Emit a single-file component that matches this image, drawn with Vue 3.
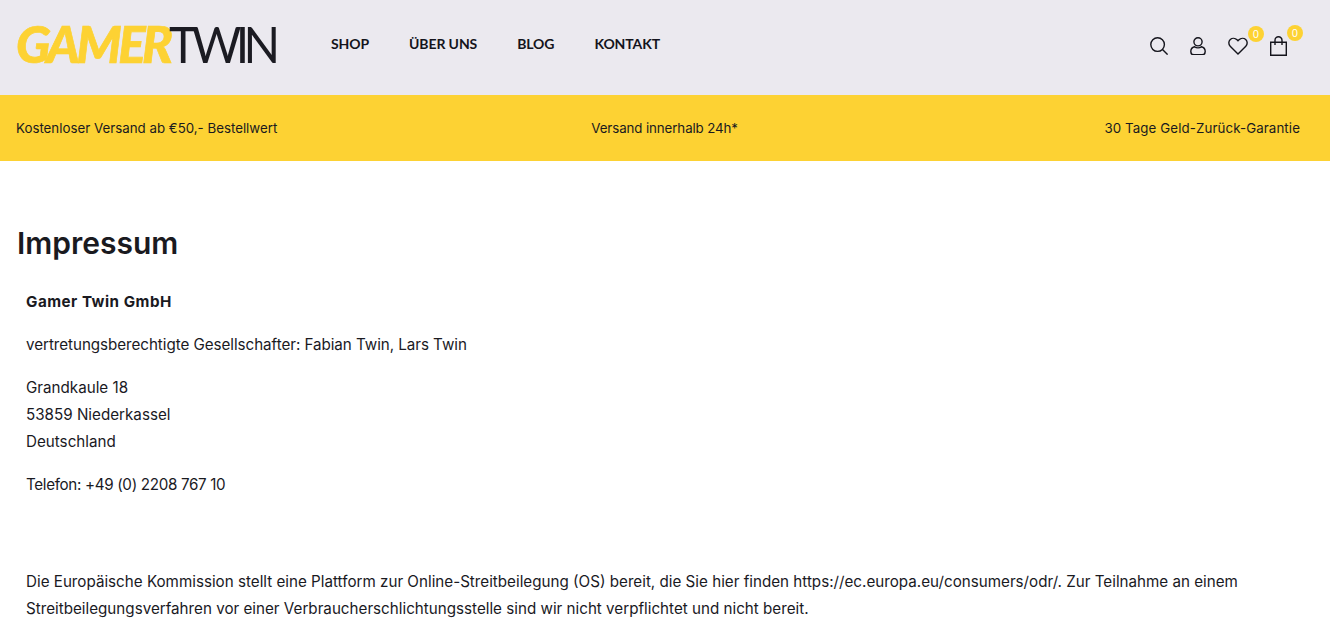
<template>
  <div class="page">
    <header class="top">
      <div class="logo"><span class="gamer">GAMER</span><span class="twin">TWIN</span></div>
      <nav class="nav">
        <a v-for="item in nav" :key="item">{{ item }}</a>
      </nav>
      <div class="icons">
        <svg class="ico search" viewBox="0 0 18 18"><circle cx="7.6" cy="7.600" r="6.800"/><path d="M12.500 12.500 17.600 17.600"/></svg>
        <svg class="ico person" viewBox="0 0 16 18.500"><circle cx="8" cy="4.800" r="4.100"/><path d="M4.600 9.700C2 10.300.8 12 .8 14.500c0 2 1 3.300 3 3.300h8.400c2 0 3-1.300 3-3.300 0-2.500-1.200-4.200-3.800-4.800-.9.800-2.100 1.200-3.400 1.200s-2.500-.4-3.400-1.200Z"/></svg>
        <span class="wrap">
          <svg class="ico heart" viewBox="0 0 20 18"><path d="M10 17 2.200 9.200C.3 7.300.4 4.200 2.300 2.500 4.200.8 7.200 1 9 2.800l1 1 1-1c1.800-1.800 4.800-2 6.700-.3 1.900 1.700 2 4.800.1 6.700L10 17Z"/></svg>
          <span class="badge">0</span>
        </span>
        <span class="wrap">
          <svg class="ico bag" viewBox="0 0 17 20"><path d="M.7 6.200h15.600v13H.7zM5 9V4.200a3.500 3.500 0 0 1 7 0V9"/></svg>
          <span class="badge">0</span>
        </span>
      </div>
    </header>
    <div class="strip">
      <span class="cell">Kostenloser Versand ab €50,- Bestellwert</span>
      <span class="cell mid">Versand innerhalb 24h*</span>
      <span class="cell end">30 Tage Geld-Zurück-Garantie</span>
    </div>
    <main class="main">
      <h1>Impressum</h1>
      <div class="body">
        <p><strong>Gamer Twin GmbH</strong></p>
        <p class="rep">vertretungsberechtigte Gesellschafter: Fabian Twin, Lars Twin</p>
        <p>Grandkaule 18<br>53859 Niederkassel<br>Deutschland</p>
        <p class="tel">Telefon: +49 (0) 2208 767 10</p>
        <p class="gap">Die Europäische Kommission stellt eine Plattform zur Online-Streitbeilegung (OS) bereit, die Sie hier finden https://ec.europa.eu/consumers/odr/. Zur Teilnahme an einem Streitbeilegungsverfahren vor einer Verbraucherschlichtungsstelle sind wir nicht verpflichtet und nicht bereit.</p>
      </div>
    </main>
  </div>
</template>

<script setup>
const nav = ['SHOP', 'ÜBER UNS', 'BLOG', 'KONTAKT']
</script>

<style>
html, body { margin: 0; background: #fff; }
</style>

<style scoped>
.page {
  width: 1330px;
  height: 640px;
  overflow: hidden;
  font-family: "Inter", "Liberation Sans", sans-serif;
  color: #1a1a1f;
}
.top {
  height: 95px;
  background: #ebe9ef;
  display: flex;
  align-items: center;
  padding: 0 43px 7px 16px;
  box-sizing: border-box;
}
.logo {
  width: 315px;
  flex: none;
  font-size: 51px;
  line-height: 1;
  white-space: nowrap;
  font-family: "Lato", sans-serif;
  margin-top: -2px;
}
.gamer {
  color: #fdd233;
  font-weight: 900;
  font-style: italic;
  letter-spacing: -3.500px;
  -webkit-text-stroke: 0.7px #fdd233;
}
.twin {
  display: inline-block;
  color: #1b1b22;
  font-weight: 400;
  letter-spacing: -6px;
  transform: scaleX(0.94);
  transform-origin: left center;
}
.nav { display: flex; gap: 40px; flex: 1; margin-top: -1px; }
.nav a {
  font-family: "Lato", sans-serif;
  font-weight: 700;
  font-size: 14px;
  letter-spacing: -0.1px;
  color: #14141c;
}
.icons { display: flex; align-items: center; gap: 22px; margin-top: 4px; }
.ico {
  fill: none;
  stroke: #14141c;
  stroke-width: 1.4;
  display: block;
}
.search { width: 18px; height: 18px; }
.person { width: 16px; height: 18.5px; }
.heart { width: 20px; height: 18px; }
.bag { width: 17px; height: 20px; }
.wrap { position: relative; display: block; }
.badge {
  position: absolute;
  top: -11px;
  right: -16px;
  width: 16px;
  height: 16px;
  border-radius: 50%;
  background: #fdd233;
  color: #fff;
  font-size: 10px;
  line-height: 16px;
  text-align: center;
}
.strip {
  height: 66px;
  background: #fdd233;
  display: flex;
  align-items: center;
  padding: 0 30px 0 16px;
  font-size: 13.300px;
  color: #1a1a1f;
}
.cell { flex: none; }
.mid { margin-left: 314px; letter-spacing: -0.1px; }
.end { margin-left: auto; letter-spacing: 0.1px; }
.main { padding: 62px 16px 0; }
h1 {
  margin: 0 0 25px 1px;
  font-size: 30px;
  line-height: 40px;
  font-weight: 600;
}
.body { padding: 0 10px; font-size: 15.200px; line-height: 27px; }
p { margin: 0 0 16px; }
strong { font-weight: 700; letter-spacing: 0.5px; }
.rep { letter-spacing: -0.05px; }
.tel { letter-spacing: -0.33px; }
.gap { margin-top: 70px; }
</style>
